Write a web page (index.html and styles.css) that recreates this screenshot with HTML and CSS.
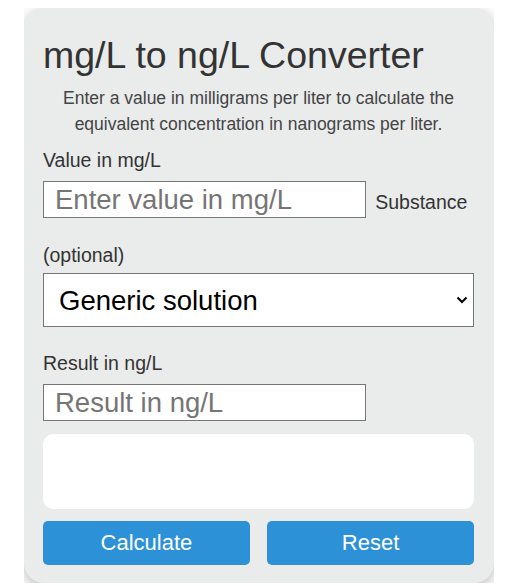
FILE: index.html
```html
<!DOCTYPE html>
<html lang="en">
<head>
<meta charset="utf-8">
<title>mg/L to ng/L Converter</title>
<link rel="stylesheet" href="styles.css">
</head>
<body>
<div class="frame">
  <div class="card">
    <h1 class="title">mg/L to ng/L Converter</h1>
    <p class="desc">Enter a value in milligrams per liter to calculate the equivalent concentration in nanograms per liter.</p>
    <label class="label" for="mg">Value in mg/L</label>
    <div class="row">
      <input class="field" id="mg" type="text" placeholder="Enter value in mg/L"><label class="label-inline" for="substance">Substance (optional)</label>
    </div>
    <div class="select-wrap">
      <select class="select" id="substance">
        <option>Generic solution</option>
      </select>
      <svg class="chevron" width="12" height="8" viewBox="0 0 12 8"><path d="M1.5 1.5 L6 6 L10.5 1.5" fill="none" stroke="#000" stroke-width="2"/></svg>
    </div>
    <label class="label result-label" for="ng">Result in ng/L</label>
    <input class="field" id="ng" type="text" placeholder="Result in ng/L" readonly>
    <div class="output"></div>
    <div class="buttons">
      <button class="btn" type="button">Calculate</button>
      <button class="btn" type="button">Reset</button>
    </div>
  </div>
</div>
</body>
</html>
```
FILE: styles.css
```css
* { box-sizing: border-box; }
html, body { margin: 0; padding: 0; background: #ffffff; }
body {
  font-family: "Liberation Sans", Arial, sans-serif;
  color: #333333;
}
.frame {
  width: 470px;
  height: 575px;
  margin: 8px 0 0 24px;
  overflow: hidden;
}
.card {
  height: 100%;
  background: #eaebeb;
  border-radius: 20px;
  box-shadow: 0 4px 14px rgba(0, 0, 0, 0.28);
  padding: 28px 20px 18px 19px;
}
.title {
  margin: 0;
  font-size: 37.5px;
  line-height: 38px;
  font-weight: normal;
  color: #333333;
}
.desc {
  margin: 11px 0 0;
  font-size: 17.5px;
  line-height: 26px;
  text-align: center;
  color: #444444;
}
.label {
  display: block;
  margin-top: 9px;
  font-size: 19.5px;
  line-height: 29px;
  color: #333333;
}
.row {
  margin-top: 6px;
  font-size: 19.5px;
  line-height: 29px;
}
.field {
  display: inline-block;
  vertical-align: baseline;
  width: 75%;
  height: 37px;
  padding: 0 11px;
  margin: 0 0 23px;
  border: 1px solid #767676;
  border-radius: 0;
  background: #ffffff;
  font-family: "Liberation Sans", Arial, sans-serif;
  font-size: 27.5px;
  color: #000000;
  outline: none;
}
.field::placeholder { color: #757575; }
.label-inline {
  margin-left: 9px;
  color: #333333;
}
.select-wrap {
  position: relative;
  margin-top: 3px;
}
.select {
  display: block;
  width: 100%;
  height: 54px;
  padding: 0 30px 0 15px;
  border: 1px solid #767676;
  border-radius: 0;
  background: #ffffff;
  -webkit-appearance: none;
  appearance: none;
  font-family: "Liberation Sans", Arial, sans-serif;
  font-size: 27.5px;
  color: #000000;
  outline: none;
}
.chevron {
  position: absolute;
  right: 6px;
  top: 23px;
  pointer-events: none;
}
.result-label { margin-top: 22px; }
.result-label + .field { margin: 6px 0 0; display: block; }
.output {
  margin-top: 13px;
  height: 75px;
  background: #ffffff;
  border-radius: 10px;
}
.buttons {
  display: flex;
  justify-content: space-between;
  margin-top: 12px;
}
.btn {
  width: 48%;
  height: 44px;
  border: none;
  border-radius: 5px;
  background: #2d91d7;
  color: #ffffff;
  font-family: "Liberation Sans", Arial, sans-serif;
  font-size: 22px;
  padding: 0;
}
```
